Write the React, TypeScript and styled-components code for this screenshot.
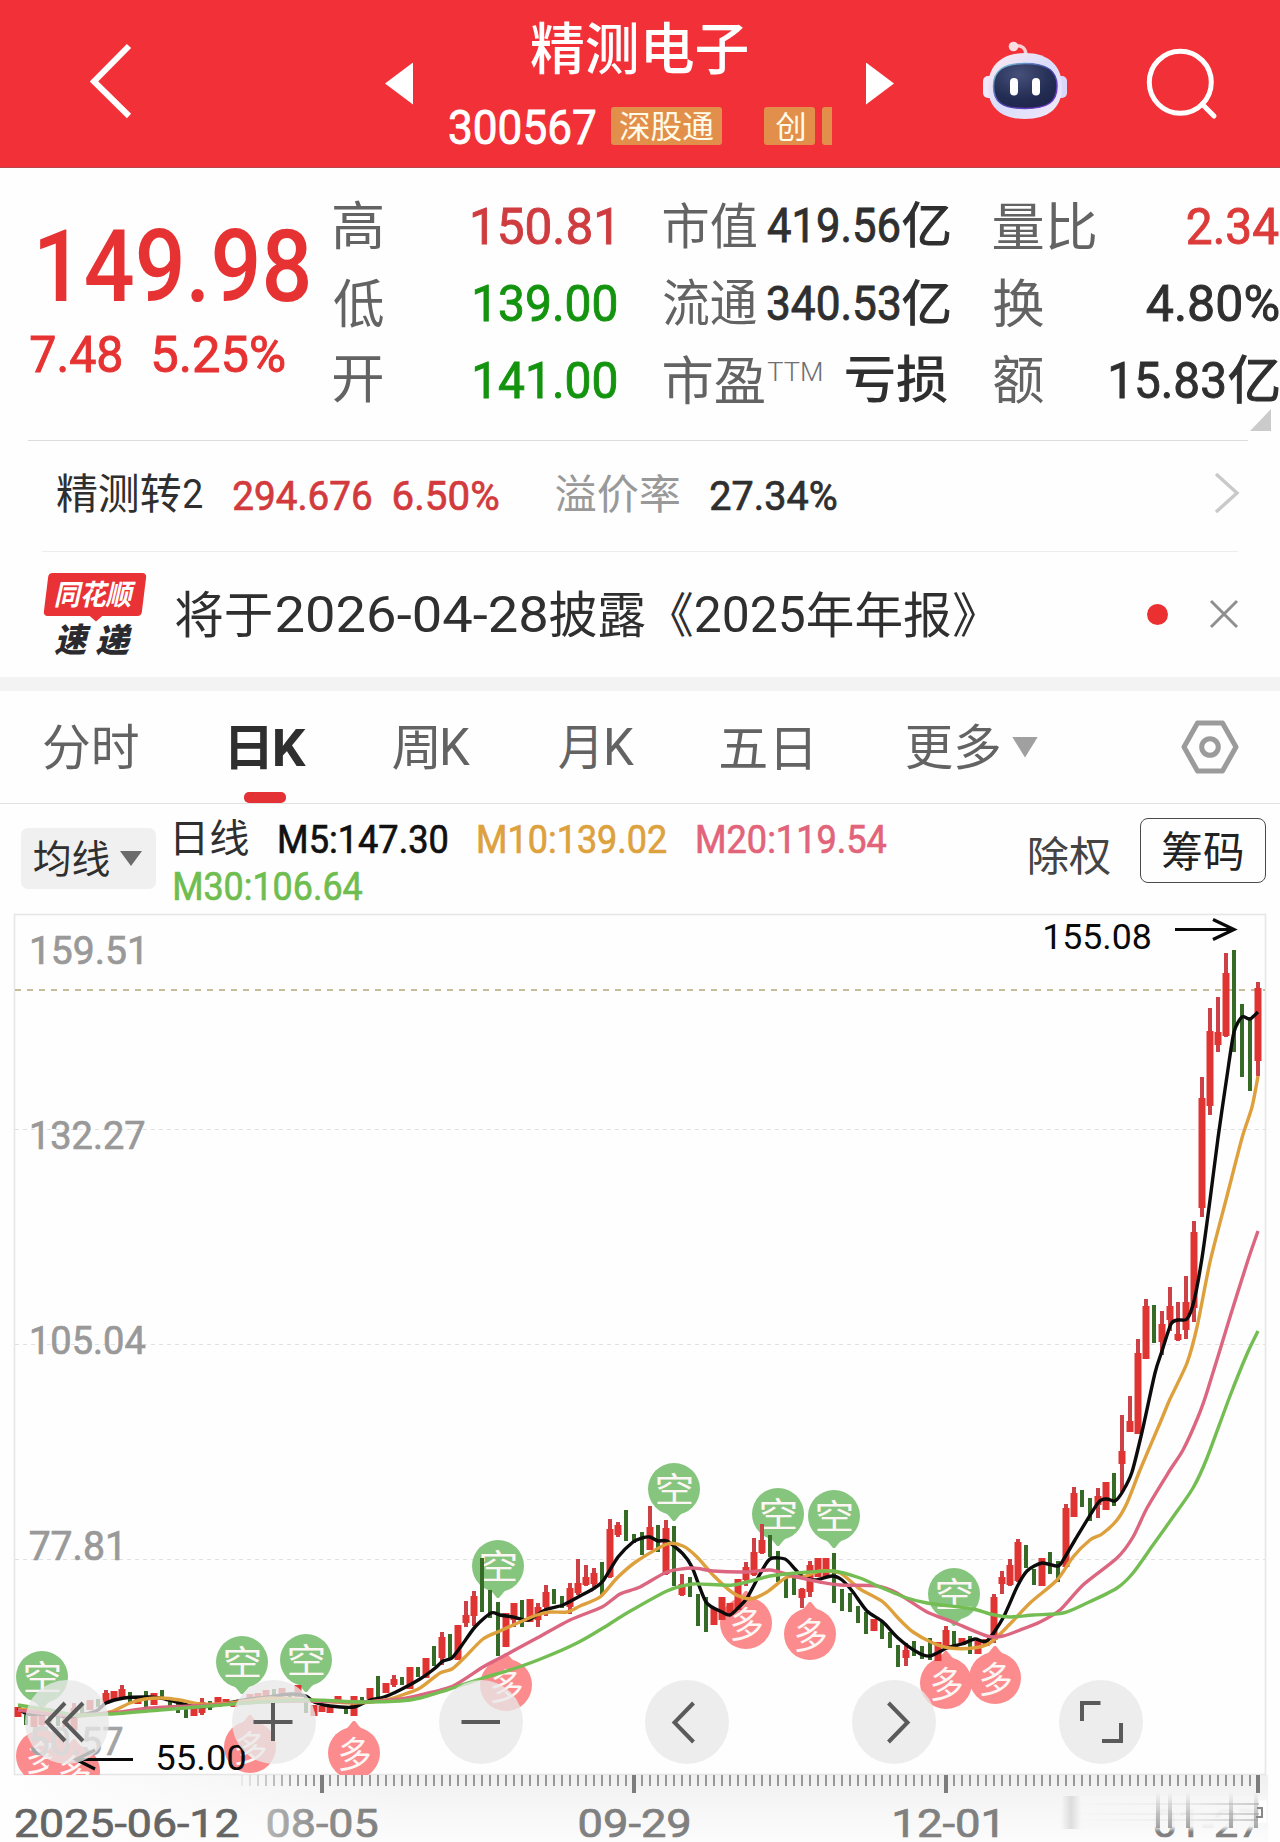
import React from "react";
import styled, { createGlobalStyle } from "styled-components";

const FONT = '"Roboto", "Noto Sans CJK SC", sans-serif';
const UP = "#e63232";
const DOWN = "#14930f";
const INK = "#2f2f2f";
const GREY = "#636363";

const GlobalStyle = createGlobalStyle`
  * { box-sizing: border-box; }
  html, body { margin: 0; padding: 0; background: #fefefe; }
  body { width: 1280px; overflow-x: hidden; font-family: ${FONT}; }
`;

/* ---------- type fitted to its ink box ---------- */

/* 450 is drawn as the regular face with a thin outline of its own colour */
const SEMI = 450;
const face = (weight: number) => (weight === SEMI ? 400 : weight);

let ctx: CanvasRenderingContext2D | null = null;
function measure(text: string, weight: number, italic: boolean, w: number, h: number) {
  if (!ctx) ctx = document.createElement("canvas").getContext("2d");
  ctx!.font = `${italic ? "italic " : ""}${face(weight)} 200px ${FONT}`;
  const m = ctx!.measureText(text);
  const a = m.actualBoundingBoxAscent / 200;
  const d = m.actualBoundingBoxDescent / 200;
  const l = m.actualBoundingBoxLeft / 200;
  const r = m.actualBoundingBoxRight / 200;
  const size = h / (a + d);
  const base = (1 + m.fontBoundingBoxAscent / 200 - m.fontBoundingBoxDescent / 200) / 2;
  return { size, sx: w / ((l + r) * size), left: l * size, asc: a * size, base: base * size };
}

const InkBox = styled.span<{ $ml?: number; $mt?: number; $mr?: number; $self?: string }>`
  display: block;
  flex: none;
  margin: ${(p) => p.$mt || 0}px ${(p) => p.$mr || 0}px 0 ${(p) => p.$ml || 0}px;
  align-self: ${(p) => p.$self || "auto"};
`;
const InkText = styled.span<{ $color: string; $weight: number; $italic?: boolean }>`
  display: block;
  width: max-content;
  white-space: nowrap;
  line-height: 1;
  text-spacing-trim: space-all;
  color: ${(p) => p.$color};
  font-weight: ${(p) => face(p.$weight)};
  -webkit-text-stroke: ${(p) => (p.$weight === SEMI ? "0.018em" : "0")} ${(p) => p.$color};
  font-style: ${(p) => (p.$italic ? "italic" : "normal")};
  transform-origin: 0 0;
`;

type InkProps = {
  children: string; w: number; h: number; color?: string; weight?: number; italic?: boolean;
  ml?: number; mt?: number; mr?: number; self?: string;
};
function Ink({ children, w, h, color = INK, weight = 400, italic = false, ml, mt, mr, self }: InkProps) {
  const m = measure(children, weight, italic, w, h);
  return (
    <InkBox $ml={ml} $mt={mt} $mr={mr} $self={self} style={{ width: w, height: h }}>
      <InkText
        $color={color} $weight={weight} $italic={italic}
        style={{
          fontSize: m.size,
          transform: `translate(${m.left * m.sx}px, ${m.asc - m.base}px) scaleX(${m.sx})`,
        }}
      >
        {children}
      </InkText>
    </InkBox>
  );
}

/* ---------- header ---------- */

const Header = styled.header`
  display: flex;
  align-items: center;
  height: 168px;
  padding-left: 90px;
  background: #f23037;
  border-bottom: 1px solid #b8474c;
`;
const BackIcon = styled.svg`
  width: 42px; height: 76px; margin: 0 253px 6px 0; flex: none;
`;
const Arrow = styled.span<{ $dir: "left" | "right" }>`
  flex: none;
  width: 28px; height: 42px;
  background: #fff;
  clip-path: ${(p) => (p.$dir === "left" ? "polygon(100% 0, 100% 100%, 0 50%)" : "polygon(0 0, 100% 50%, 0 100%)")};
`;
const TitleBlock = styled.div`
  display: flex;
  flex-direction: column;
  align-self: flex-start;
  width: 383px;
  margin: 23px 34px 0 36px;
`;
const CodeRow = styled.div`
  display: flex;
  align-items: center;
  width: 383px;
  height: 38px;
  margin-top: 32px;
`;
const Badge = styled.span<{ $w: number; $ml: number; $cut?: boolean }>`
  display: flex;
  align-items: center;
  justify-content: center;
  flex: none;
  width: ${(p) => p.$w}px;
  height: 38px;
  margin-left: ${(p) => p.$ml}px;
  border-radius: ${(p) => (p.$cut ? "3px 0 0 3px" : "3px")};
  background: #e28f4b;
`;
const RobotIcon = styled.svg`
  width: 90px; height: 82px; flex: none; margin: 0 0 6px 86px;
`;
const SearchIcon = styled.svg`
  width: 76px; height: 76px; flex: none; margin-left: 74px;
`;

/* ---------- quote ---------- */

const Quote = styled.section`
  position: relative;
  display: flex;
  height: 272px;
  padding: 18px 2px 0 29px;
`;
const PriceBlock = styled.div`
  width: 305px;
  padding: 43px 0 0 11px;
`;
const ChangeRow = styled.div`
  display: flex;
  margin: 33px 0 0 -10px;
`;
const Stats = styled.div<{ $ml: number; $w: number }>`
  display: grid;
  grid-template-rows: repeat(3, 77.5px);
  width: ${(p) => p.$w}px;
  margin-left: ${(p) => p.$ml}px;
  height: 233px;
`;
const Stat = styled.div`
  display: flex;
  align-items: center;
  justify-content: space-between;
`;
const Group = styled.div`
  display: flex;
  align-items: center;
`;
const Corner = styled.span`
  position: absolute;
  right: 9px;
  bottom: 9px;
  width: 21px;
  height: 22px;
  background: #cbcbcb;
  clip-path: polygon(100% 0, 100% 100%, 0 100%);
`;
const Rule = styled.hr<{ $l: number; $r: number; $c: string }>`
  height: 1px;
  margin: 0 ${(p) => p.$r}px 0 ${(p) => p.$l}px;
  border: 0;
  background: ${(p) => p.$c};
`;

/* ---------- bond and news rows ---------- */

const BondRow = styled.section`
  display: flex;
  align-items: center;
  height: 110px;
  padding: 0 40px 5px 57px;
`;
const Spacer = styled.span`
  flex: 1;
`;
const ChevronIcon = styled.svg`
  width: 26px; height: 44px; flex: none;
`;
const NewsRow = styled.section`
  display: flex;
  align-items: center;
  height: 125px;
  padding: 0 42px 0 43px;
`;
const Logo = styled.div`
  display: flex;
  flex-direction: column;
  align-items: center;
  width: 104px;
  height: 84px;
  margin-right: 29px;
`;
const LogoTag = styled.div`
  position: relative;
  display: flex;
  align-items: center;
  justify-content: center;
  width: 98px;
  height: 43px;
  &::before {
    content: "";
    position: absolute;
    inset: 0;
    border-radius: 4px;
    background: #e93236;
    transform: skewX(-7deg);
  }
  &::after {
    content: "";
    position: absolute;
    left: 42px;
    bottom: -6px;
    width: 16px;
    height: 7px;
    background: #e93236;
    clip-path: polygon(0 0, 100% 0, 50% 100%);
  }
  > span { position: relative; }
`;
const LogoWord = styled.div`
  display: flex;
  gap: 5px;
  margin: 8px 3px 0 0;
`;
const Dot = styled.span`
  width: 21px; height: 21px; border-radius: 50%; background: #ea3030; flex: none;
`;
const CloseIcon = styled.svg`
  width: 32px; height: 32px; flex: none; margin: 0 -2px 2px 40px;
`;
const Band = styled.div`
  height: 14px;
  background: #f3f3f3;
`;

/* ---------- tabs ---------- */

const Tabs = styled.nav`
  display: flex;
  align-items: center;
  height: 112px;
  padding-left: 44px;
`;
const Tab = styled.div<{ $ml: number; $active?: boolean }>`
  position: relative;
  display: flex;
  align-items: center;
  height: 112px;
  margin-left: ${(p) => p.$ml}px;
  &::after {
    content: "";
    display: ${(p) => (p.$active ? "block" : "none")};
    position: absolute;
    left: 13px;
    bottom: 0;
    width: 42px;
    height: 11px;
    border-radius: 5px;
    background: #e43135;
  }
`;
const Caret = styled.span<{ $w: number; $h: number; $ml: number; $c: string }>`
  flex: none;
  width: ${(p) => p.$w}px;
  height: ${(p) => p.$h}px;
  margin-left: ${(p) => p.$ml}px;
  background: ${(p) => p.$c};
  clip-path: polygon(0 0, 100% 0, 50% 100%);
`;
const HexIcon = styled.svg`
  width: 60px; height: 56px; flex: none; margin-left: 142px;
`;

/* ---------- indicator bar ---------- */

const Indicators = styled.section`
  display: flex;
  height: 102px;
  padding: 14px 14px 0 21px;
`;
const Chip = styled.div`
  display: flex;
  align-items: center;
  width: 135px;
  height: 61px;
  margin-top: 10px;
  padding-left: 12px;
  border-radius: 7px;
  background: #f0f0f0;
`;
const Legend = styled.div`
  flex: 1;
  padding-top: 1px;
`;
const LegendRow = styled.div`
  display: flex;
  align-items: center;
`;
const ChipsButton = styled.div`
  display: flex;
  align-items: center;
  justify-content: center;
  width: 126px;
  height: 65px;
  margin-left: 30px;
  border: 1.5px solid #4a4a4a;
  border-radius: 8px;
`;

/* ---------- chart ---------- */

const ChartPanel = styled.section`
  position: relative;
  height: 936px;
  overflow: hidden;
`;
const ChartSvg = styled.svg`
  display: block;
  width: 1280px;
  height: 936px;
`;
const Controls = styled.div`
  position: absolute;
  left: 25px;
  top: 774px;
  width: 1118px;
  display: flex;
  justify-content: space-between;
`;
const RoundButton = styled.div`
  width: 84px;
  height: 84px;
  border-radius: 50%;
  background: rgba(232, 232, 232, 0.78);
  svg { display: block; width: 84px; height: 84px; }
`;

type Candle = [0 | 1, number, number, number?, number?];
/* 1 = up; then high, low and, where they differ, body top and body bottom */
const CANDLES: Candle[] = [
  [1,1707,1717],[0,1715,1725],[1,1713,1727],[1,1713,1725],[0,1712,1722],[0,1714,1726],[1,1715,1727],[1,1703,1733,1708,1730],[0,1704,1716],[1,1700,1710],
  [0,1699,1707],[1,1690,1704,1693,1704],[1,1691,1700],[1,1685,1698,1689,1698],[0,1692,1703],[1,1697,1704],[0,1691,1708],[1,1693,1705],[0,1690,1700],[0,1697,1707],
  [0,1702,1713],[0,1705,1718],[1,1706,1716],[1,1698,1715,1702,1713],[0,1701,1710],[1,1697,1707],[1,1699,1706],[1,1701,1707],[0,1701,1704],[1,1694,1701],
  [1,1693,1699],[1,1690,1698],[0,1689,1697],[1,1688,1695],[0,1693,1698],[1,1685,1697],[0,1697,1713],[1,1705,1716],[1,1706,1712],[1,1707,1713],
  [1,1696,1703],[0,1707,1714],[1,1696,1716],[0,1697,1702],[1,1688,1699],[0,1676,1698],[1,1683,1693],[1,1675,1687,1679,1685],[0,1677,1685],[1,1667,1689],
  [0,1667,1677],[1,1658,1678],[0,1646,1666],[1,1632,1665,1637,1658],[0,1634,1658],[1,1625,1660],[1,1601,1627,1615,1623],[1,1591,1626,1596,1616],[0,1558,1612],[0,1590,1618],
  [0,1602,1656],[1,1613,1647],[1,1603,1627,1603,1620],[0,1600,1627],[1,1599,1622],[1,1603,1627,1607,1620],[1,1585,1616,1592,1607],[0,1589,1604],[0,1596,1608],[1,1583,1614,1588,1607],
  [1,1559,1595,1583,1593],[1,1565,1586,1577,1585],[1,1568,1587,1573,1584],[0,1562,1596],[1,1519,1578,1529,1577],[1,1522,1537,1525,1535],[0,1510,1541],[0,1534,1543],[0,1532,1555],[1,1506,1550,1527,1550],
  [0,1525,1552],[1,1520,1575,1528,1574],[0,1526,1586],[1,1574,1596,1584,1595],[0,1577,1597],[0,1594,1626],[0,1597,1632],[1,1608,1625],[1,1597,1620],[1,1603,1615],
  [1,1579,1610],[1,1562,1586,1567,1580],[1,1538,1576,1552,1575],[1,1524,1554,1540,1553],[0,1535,1557],[0,1551,1582],[0,1577,1598],[0,1577,1595],[1,1588,1608,1589,1598],[1,1561,1597,1565,1592],
  [1,1558,1577],[1,1558,1577],[0,1553,1603],[0,1589,1611],[0,1593,1612],[0,1606,1623],[0,1612,1634],[1,1619,1631],[0,1622,1639],[0,1632,1648],
  [0,1645,1667],[1,1643,1666,1650,1658],[0,1641,1656],[0,1646,1659],[0,1638,1660],[1,1642,1661],[1,1626,1647,1630,1647],[0,1631,1645],[1,1638,1645],[0,1636,1654],
  [1,1641,1654],[1,1639,1646],[1,1594,1643,1597,1640],[1,1571,1594,1577,1584],[1,1559,1586,1565,1585],[1,1539,1582,1542,1581],[0,1545,1568],[0,1569,1585],[1,1558,1586],[0,1552,1574],
  [0,1561,1582],[1,1504,1568,1508,1567],[1,1487,1517,1493,1517],[0,1490,1507],[0,1498,1521],[1,1488,1518,1496,1505],[1,1482,1510],[0,1473,1506],[1,1415,1492,1451,1464],[1,1396,1432,1421,1432],
  [1,1339,1434,1353,1434],[1,1299,1359,1306,1359],[0,1305,1343],[1,1311,1355,1324,1342],[1,1287,1331,1306,1320],[1,1302,1341,1334,1340],[1,1276,1339,1302,1330],[1,1221,1322,1232,1308],[1,1077,1217,1098,1208],[1,1008,1115,1031,1106],
  [1,997,1052,1032,1045],[1,953,1037,973,1036],[0,950,1052],[0,1004,1077],[0,1017,1091],[1,982,1076,988,1061],
];

const MA5 = "18,1708 28,1714 50,1714 70,1717 96,1711 106,1703 124,1698 150,1697 165,1699 180,1703 192,1706 210,1706 250,1699 270,1697 290,1694 306,1696 314,1702 330,1706 354,1707 370,1700 384,1697 400,1690 420,1679 434,1669 443,1661 452,1658 462,1645 475,1627 491,1613 500,1615 513,1617 528,1620 545,1610 563,1605 580,1596 593,1589 603,1581 618,1557 633,1542 642,1538 650,1537 658,1541 667,1541 683,1554 692,1567 706,1602 722,1612 730,1615 738,1608 747,1598 760,1574 770,1559 785,1559 795,1569 802,1576 815,1580 832,1576 842,1580 853,1592 867,1611 883,1622 898,1638 917,1652 930,1656 947,1648 962,1644 975,1639 987,1641 1003,1618 1017,1587 1027,1571 1042,1563 1058,1566 1065,1557 1075,1540 1098,1503 1107,1499 1115,1501 1123,1491 1132,1472 1142,1432 1155,1373 1162,1351 1171,1324 1178,1320 1187,1319 1194,1301 1202,1258 1210,1200 1218,1138 1227,1076 1234,1032 1242,1017 1250,1019 1258,1012";
const MA10 = "18,1709 50,1712 80,1716 110,1712 130,1703 145,1699 162,1698 180,1700 200,1704 230,1703 270,1698 320,1701 354,1703 385,1700 405,1694 420,1688 440,1673 452,1669 465,1657 483,1639 500,1631 520,1622 537,1615 550,1612 567,1612 580,1606 600,1597 617,1578 637,1561 667,1544 683,1546 697,1557 713,1575 733,1593 750,1599 767,1592 787,1577 803,1577 820,1571 840,1573 860,1589 883,1602 900,1620 913,1632 933,1643 950,1648 973,1648 990,1643 1010,1624 1030,1603 1057,1580 1073,1557 1090,1540 1102,1534 1117,1520 1127,1503 1140,1470 1160,1423 1170,1399 1187,1363 1197,1327 1210,1262 1227,1196 1242,1138 1252,1107 1258,1076";
const MA20 = "18,1710 60,1715 110,1713 150,1708 210,1705 260,1702 310,1701 360,1702 400,1699 420,1695 453,1686 483,1667 500,1658 537,1638 570,1620 602,1607 620,1594 640,1587 667,1572 693,1568 713,1571 747,1572 770,1570 793,1576 820,1582 840,1585 877,1586 897,1593 927,1612 953,1622 987,1636 1003,1636 1020,1630 1040,1622 1060,1610 1083,1585 1117,1558 1133,1537 1147,1508 1170,1470 1183,1450 1198,1417 1207,1392 1230,1317 1248,1260 1258,1231";
const MA30 = "18,1705 50,1710 75,1715 110,1714 160,1710 210,1706 260,1702 310,1700 360,1702 400,1701 420,1698 453,1688 483,1678 513,1669 543,1658 577,1643 603,1628 627,1613 667,1591 693,1584 733,1585 770,1576 797,1573 833,1571 860,1578 880,1587 907,1598 927,1603 973,1609 990,1614 1010,1617 1033,1615 1063,1613 1087,1603 1117,1588 1133,1573 1153,1545 1173,1517 1193,1488 1207,1458 1230,1396 1247,1354 1258,1331";

/* Catmull-Rom smoothing through the sampled average values */
function smooth(points: string) {
  const p = points.split(" ").map((s) => s.split(",").map(Number));
  let d = `M${p[0][0]},${p[0][1]}`;
  for (let i = 0; i < p.length - 1; i++) {
    const a = p[i - 1] || p[i], b = p[i], c = p[i + 1], e = p[i + 2] || c;
    const k = 8;
    d += ` C${(b[0] + (c[0] - a[0]) / k).toFixed(1)},${(b[1] + (c[1] - a[1]) / k).toFixed(1)} ${(c[0] - (e[0] - b[0]) / k).toFixed(1)},${(c[1] - (e[1] - b[1]) / k).toFixed(1)} ${c[0]},${c[1]}`;
  }
  return d;
}

const SHORTS = [[42, 1677], [242, 1662], [306, 1660], [498, 1566], [674, 1489], [778, 1514], [834, 1516], [954, 1594]];
const LONGS = [[42, 1756], [74, 1771], [250, 1747], [354, 1753], [506, 1685], [746, 1623], [810, 1634], [946, 1683], [995, 1678]];

function SvgInk(p: { x: number; y: number; w: number; h: number; children: string; fill: string; weight?: number }) {
  const weight = p.weight || 400;
  const m = measure(p.children, weight, false, p.w, p.h);
  return (
    <text
      transform={`translate(${p.x + m.left * m.sx} ${p.y + m.asc}) scale(${m.sx} 1)`}
      fontFamily={FONT} fontSize={m.size} fontWeight={face(weight)} fill={p.fill}
      stroke={weight === SEMI ? p.fill : "none"} strokeWidth={m.size * 0.018}
    >
      {p.children}
    </text>
  );
}

function Marker({ x, y, long }: { x: number; y: number; long?: boolean }) {
  const tip = "M-22,13 Q-8,22 -1,32 L1,32 Q8,22 22,13 Z";
  return (
    <g transform={`translate(${x} ${y})`}>
      <g fill={long ? "#fb8b8c" : "#86c57e"} transform={long ? "scale(1 -1)" : undefined}>
        <circle r="26" />
        <path d={tip} />
      </g>
      <SvgInk x={long ? -14 : -16.5} y={long ? -16 : -16} w={long ? 30 : 34} h={long ? 34 : 31} fill="#fdf6f4">
        {long ? "多" : "空"}
      </SvgInk>
    </g>
  );
}

function Chart() {
  const ticks = [];
  for (let x = 242; x <= 1258; x += 8) {
    const major = x >= 322 && (x - 322) % 312 === 0;
    ticks.push(
      <rect
        key={x} x={major ? x - 2 : x - 1} y={1775} width={major ? 4 : 2} height={major ? 18 : 11}
        fill={major ? "#7d7d7d" : "#989898"} opacity={Math.min(1, (x - 232) / 70)}
      />
    );
  }
  return (
    <ChartSvg viewBox="0 906 1280 936">
      <defs>
        <linearGradient id="axis" x1="0" y1="0" x2="0" y2="1">
          <stop offset="0" stopColor="#f0f0f0" />
          <stop offset="0.6" stopColor="#f8f8f8" />
          <stop offset="1" stopColor="#fcfcfc" />
        </linearGradient>
        <linearGradient id="axisLeft" x1="0" y1="0" x2="1" y2="0">
          <stop offset="0" stopColor="#fefefe" />
          <stop offset="1" stopColor="#fefefe" stopOpacity="0" />
        </linearGradient>
        <linearGradient id="dateFade" x1="0" y1="0" x2="1" y2="0">
          <stop offset="0" stopColor="#b4b4b4" />
          <stop offset="0.5" stopColor="#8c8c8c" />
          <stop offset="1" stopColor="#808080" />
        </linearGradient>
        <linearGradient id="veil" x1="0" y1="0" x2="0" y2="1">
          <stop offset="0" stopColor="#f6f6f6" stopOpacity="0.95" />
          <stop offset="0.84" stopColor="#f8f8f8" stopOpacity="0.95" />
          <stop offset="1" stopColor="#f8f8f8" stopOpacity="0" />
        </linearGradient>
        <linearGradient id="streak" x1="0" y1="0" x2="0" y2="1">
          <stop offset="0" stopColor="#888" stopOpacity="0" />
          <stop offset="1" stopColor="#888" stopOpacity="0.75" />
        </linearGradient>
        <linearGradient id="smear" x1="0" y1="0" x2="1" y2="0">
          <stop offset="0" stopColor="#aaa" stopOpacity="0" />
          <stop offset="0.6" stopColor="#aaa" stopOpacity="0.14" />
          <stop offset="1" stopColor="#999" stopOpacity="0.5" />
        </linearGradient>
        <linearGradient id="smudge" x1="0" y1="0" x2="1" y2="0">
          <stop offset="0" stopColor="#aaa" stopOpacity="0" />
          <stop offset="0.5" stopColor="#aaa" stopOpacity="0.35" />
          <stop offset="1" stopColor="#aaa" stopOpacity="0" />
        </linearGradient>
        <clipPath id="frame"><rect x="14" y="914" width="1252" height="861" /></clipPath>
      </defs>

      <rect x="0" y="1775" width="1268" height="67" fill="url(#axis)" />
      <rect x="0" y="1775" width="420" height="67" fill="url(#axisLeft)" />

      <rect x="14.5" y="914.5" width="1251" height="860" fill="none" stroke="#e6e6e6" strokeWidth="1.6" />
      {[1129, 1344, 1559].map((y) => (
        <line key={y} x1="15" x2="1265" y1={y + 0.5} y2={y + 0.5} stroke="#e0e0e0" strokeDasharray="4 4" />
      ))}
      <line x1="15" x2="1265" y1="990" y2="990" stroke="#b5a878" strokeWidth="1.6" strokeDasharray="6 6" />

      <SvgInk x={32} y={935} w={109} h={29} fill="#999" weight={SEMI}>159.51</SvgInk>
      <SvgInk x={32} y={1120} w={112} h={29} fill="#999" weight={SEMI}>132.27</SvgInk>
      <SvgInk x={32} y={1325} w={113} h={29} fill="#999" weight={SEMI}>105.04</SvgInk>
      <SvgInk x={30} y={1530} w={89} h={30} fill="#999" weight={SEMI}>77.81</SvgInk>

      <g clipPath="url(#frame)">
        {SHORTS.map(([x, y]) => <Marker key={x} x={x} y={y} />)}
        {LONGS.map(([x, y]) => <Marker key={x} x={x} y={y} long />)}
        <SvgInk x={31} y={1726} w={91} h={29} fill="#a3a3a3" weight={SEMI}>50.57</SvgInk>
        {CANDLES.map(([up, hi, lo, top = hi, bottom = lo], i) => {
          const x = 18 + i * 8;
          return up ? (
            <g key={i}>
              <rect x={x - 2} y={hi} width="4" height={lo - hi} fill="#cb4145" />
              <rect x={x - 3.5} y={top} width="7" height={bottom - top} fill="#e03433" />
            </g>
          ) : (
            <rect key={i} x={x - 2} y={hi} width="4" height={lo - hi} fill="#356a27" />
          );
        })}
        <g fill="none" strokeWidth="3.4" strokeLinejoin="round">
          <path d={smooth(MA5)} stroke="#0c0c0c" />
          <path d={smooth(MA10)} stroke="#dea03c" />
          <path d={smooth(MA20)} stroke="#dc6680" />
          <path d={smooth(MA30)} stroke="#74bd53" />
        </g>
      </g>

      <g fill="none" stroke="#0a0a0a" strokeWidth="3.2">
        <path d="M1175,929.5 H1233" />
        <path d="M1213,919.500 L1234,929.5 L1213,939.5" />
        <path d="M133,1759.500 H78" />
        <path d="M95,1769 L76,1759.500 L95,1750" />
      </g>
      <SvgInk x={1045} y={923} w={105} h={26} fill="#0a0a0a">155.08</SvgInk>
      <SvgInk x={158} y={1744} w={87} h={26} fill="#0a0a0a">55.00</SvgInk>

      {ticks}
      <SvgInk x={16} y={1808} w={222} h={29} fill="#666" weight={SEMI}>2025-06-12</SvgInk>
      <SvgInk x={268} y={1808} w={109} h={29} fill="url(#dateFade)" weight={SEMI}>08-05</SvgInk>
      <SvgInk x={580} y={1808} w={109} h={29} fill="#808080" weight={SEMI}>09-29</SvgInk>
      <SvgInk x={895} y={1808} w={102} h={29} fill="#808080" weight={SEMI}>12-01</SvgInk>
      <SvgInk x={1155} y={1808} w={106} h={29} fill="#808080" weight={SEMI}>01-27</SvgInk>
      <rect x="1060" y="1796" width="208" height="36" fill="url(#veil)" />
      {[1156, 1168, 1186, 1229, 1254].map((x) => (
        <rect key={x} x={x} y="1792" width="4" height="36" fill="url(#streak)" />
      ))}
      <rect x="1061" y="1796" width="20" height="33" fill="url(#smudge)" />
      {[1803, 1813, 1819].map((y) => (
        <rect key={y} x="1070" y={y} width="192" height="2" fill="url(#smear)" />
      ))}
      <path d="M1259,1803 H1264 V1810 M1259,1813 H1264 V1820 H1258" fill="none" stroke="#fff" strokeWidth="5" />
      <path d="M1257,1808 H1262 V1817 H1256" fill="none" stroke="#888" strokeWidth="2" />
    </ChartSvg>
  );
}

const ICONS = [
  "M40,23 L22,42 L40,61 M58,23 L39.500,42 L58,61",
  "M21.500,42 H60.500 M41,23 V61",
  "M22.500,42 H61",
  "M48.500,23 L29.500,42.500 L48.500,62",
  "M36.500,23 L55.500,42.500 L36.500,62",
  "M23,41 V23 H41.500 M43,61 H62 V43",
];

export default function App() {
  return (
    <>
      <GlobalStyle />
      <Header>
        <BackIcon viewBox="0 0 42 76">
          <path d="M39,3 L4,38.500 L39,73" fill="none" stroke="#fff" strokeWidth="6" />
        </BackIcon>
        <Arrow $dir="left" />
        <TitleBlock>
          <Ink w={216} h={52} color="#fff" weight={500} ml={82}>精测电子</Ink>
          <CodeRow>
            <Ink w={145} h={36} color="#fff" weight={SEMI} mt={2} ml={1}>300567</Ink>
            <Badge $w={111} $ml={16}><Ink w={93} h={29} color="#fffbe9">深股通</Ink></Badge>
            <Badge $w={51} $ml={42}><Ink w={28} h={29} color="#fffbe9">创</Ink></Badge>
            <Badge $w={10} $ml={7} $cut />
          </CodeRow>
        </TitleBlock>
        <Arrow $dir="right" />
        <RobotIcon viewBox="980 40 90 82">
          <defs>
            <linearGradient id="shell" x1="0" y1="0" x2="1" y2="1">
              <stop offset="0" stopColor="#ffe9ee" />
              <stop offset="0.5" stopColor="#d9dcfb" />
              <stop offset="1" stopColor="#f3ecfa" />
            </linearGradient>
            <linearGradient id="rim" x1="0" y1="0" x2="1" y2="1">
              <stop offset="0" stopColor="#7fd4dd" />
              <stop offset="0.5" stopColor="#4a46b0" />
              <stop offset="1" stopColor="#7a35c8" />
            </linearGradient>
            <radialGradient id="visor" cx="0.4" cy="0.25" r="0.9">
              <stop offset="0" stopColor="#46507a" />
              <stop offset="0.6" stopColor="#232c52" />
              <stop offset="1" stopColor="#1d2348" />
            </radialGradient>
          </defs>
          <path d="M1014,46 Q1026,44 1026,56" fill="none" stroke="#fbcdd4" strokeWidth="3.500" />
          <circle cx="1013.500" cy="46.500" r="4.800" fill="#fcdde2" />
          <rect x="983" y="76" width="12" height="22" rx="5" fill="#efe9fc" />
          <rect x="1055" y="76" width="12" height="22" rx="5" fill="#dcd6fa" />
          <path d="M1025,53 C1049,53 1062,66 1062,87 C1062,108 1048,119 1025,119 C1002,119 988,108 988,87 C988,66 1001,53 1025,53 Z" fill="url(#shell)" />
          <path d="M1025,63.500 C1046,63.500 1057,70 1057,86 C1057,102 1048,108.500 1025,108.500 C1002,108.500 993.500,102 993.500,86 C993.500,70 1004,63.500 1025,63.500 Z" fill="url(#visor)" stroke="url(#rim)" strokeWidth="1.500" />
          <rect x="1010" y="78" width="8" height="17.500" rx="4" fill="#fff" />
          <rect x="1032" y="78" width="8" height="17.500" rx="4" fill="#fff" />
        </RobotIcon>
        <SearchIcon viewBox="1144 46 76 76">
          <circle cx="1180.300" cy="82.300" r="31" fill="none" stroke="#fff" strokeWidth="5" />
          <path d="M1202,104 L1214,116" stroke="#fff" strokeWidth="5" strokeLinecap="round" />
        </SearchIcon>
      </Header>

      <Quote>
        <PriceBlock>
          <Ink w={268} h={74} color={UP} weight={500}>149.98</Ink>
          <ChangeRow>
            <Ink w={90} h={37} color={UP} weight={SEMI} ml={1}>7.48</Ink>
            <Ink w={130} h={37} color={UP} weight={SEMI} ml={33}>5.25%</Ink>
          </ChangeRow>
        </PriceBlock>
        <Stats $ml={0} $w={282}>
          <Stat><Ink w={48} h={49} color={GREY} mt={2}>高</Ink><Ink w={138} h={37} color="#cf3c40" weight={SEMI} mr={5} mt={4}>150.81</Ink></Stat>
          <Stat><Ink w={49} h={49} color={GREY} mt={2}>低</Ink><Ink w={141} h={37} color={DOWN} weight={SEMI} mt={3}>139.00</Ink></Stat>
          <Stat><Ink w={48} h={46} color={GREY} mt={1}>开</Ink><Ink w={141} h={37} color={DOWN} weight={SEMI} mt={1}>141.00</Ink></Stat>
        </Stats>
        <Stats $ml={48} $w={285}>
          <Stat>
            <Ink w={92} h={46} color={GREY} mt={2}>市值</Ink>
            <Group><Ink w={131} h={35} weight={SEMI} mt={4}>419.56</Ink><Ink w={46} h={45} weight={SEMI} ml={4} mt={2}>亿</Ink></Group>
          </Stat>
          <Stat>
            <Ink w={92} h={46} color={GREY} mt={1}>流通</Ink>
            <Group><Ink w={131} h={35} weight={SEMI} mt={4}>340.53</Ink><Ink w={46} h={45} weight={SEMI} ml={4} mt={2}>亿</Ink></Group>
          </Stat>
          <Stat>
            <Group><Ink w={100} h={49} color={GREY}>市盈</Ink><Ink w={53} h={19} color="#6f6f6f" weight={300} ml={4} mt={7} self="flex-start">TTM</Ink></Group>
            <Ink w={101} h={48} weight={500} mr={2} mt={1}>亏损</Ink>
          </Stat>
        </Stats>
        <Stats $ml={45} $w={284}>
          <Stat><Ink w={101} h={48} color={GREY} mt={2}>量比</Ink><Ink w={90} h={37} color="#dd3a3a" weight={SEMI} mt={4}>2.34</Ink></Stat>
          <Stat><Ink w={49} h={49} color={GREY} mt={2}>换</Ink><Ink w={131} h={37} weight={SEMI} mt={3}>4.80%</Ink></Stat>
          <Stat>
            <Ink w={49} h={49} color={GREY}>额</Ink>
            <Group><Ink w={113} h={37} weight={SEMI} mt={2}>15.83</Ink><Ink w={49} h={48} weight={SEMI} ml={5}>亿</Ink></Group>
          </Stat>
        </Stats>
        <Corner />
      </Quote>

      <Rule $l={28} $r={32} $c="#dcdcdc" />
      <BondRow>
        <Ink w={123} h={39}>精测转</Ink>
        <Ink w={18} h={30} ml={4}>2</Ink>
        <Ink w={137} h={30} color="#d23a3d" weight={SEMI} ml={32} mt={4}>294.676</Ink>
        <Ink w={104} h={30} color="#d23a3d" weight={SEMI} ml={23} mt={4}>6.50%</Ink>
        <Ink w={123} h={39} color="#999" ml={58} mt={2}>溢价率</Ink>
        <Ink w={125} h={30} weight={SEMI} ml={32} mt={4}>27.34%</Ink>
        <Spacer />
        <ChevronIcon viewBox="0 0 26 44">
          <path d="M2,2 L23,21 L2,40" fill="none" stroke="#c9c9c9" strokeWidth="3.4" />
        </ChevronIcon>
      </BondRow>
      <Rule $l={42} $r={42} $c="#ececec" />

      <NewsRow>
        <Logo>
          <LogoTag><Ink w={81} h={27} color="#fff" weight={700} italic>同花顺</Ink></LogoTag>
          <LogoWord>
            <Ink w={36} h={32} color="#2b2b2f" weight={900} italic>速</Ink>
            <Ink w={36} h={32} color="#2b2b2f" weight={900} italic>递</Ink>
          </LogoWord>
        </Logo>
        <Ink w={95} h={46}>将于</Ink>
        <Ink w={269} h={37} ml={6}>2026-04-28</Ink>
        <Ink w={95} h={46} ml={4}>披露</Ink>
        <Ink w={21} h={45} ml={26}>《</Ink>
        <Ink w={108} h={37} ml={4}>2025</Ink>
        <Ink w={142} h={46} ml={4}>年年报</Ink>
        <Ink w={21} h={45} ml={4}>》</Ink>
        <Spacer />
        <Dot />
        <CloseIcon viewBox="0 0 32 32">
          <path d="M3,3 L29,29 M29,3 L3,29" stroke="#8f8f8f" strokeWidth="3" />
        </CloseIcon>
      </NewsRow>
      <Band />

      <Tabs>
        <Tab $ml={0}><Ink w={94} h={45} color={GREY} mt={1}>分时</Ink></Tab>
        <Tab $ml={93} $active>
          <Ink w={36} h={43} weight={700} mt={2}>日</Ink><Ink w={31} h={37} weight={700} ml={8} mt={2}>K</Ink>
        </Tab>
        <Tab $ml={87}><Ink w={43} h={43} color={GREY} mt={3}>周</Ink><Ink w={27} h={37} color={GREY} ml={7} mt={1}>K</Ink></Tab>
        <Tab $ml={89}><Ink w={37} h={43} color={GREY} mt={3}>月</Ink><Ink w={27} h={37} color={GREY} ml={11} mt={1}>K</Ink></Tab>
        <Tab $ml={87}><Ink w={89} h={42} color={GREY} mt={3}>五日</Ink></Tab>
        <Tab $ml={97}><Ink w={92} h={45} color={GREY} mt={1}>更多</Ink><Caret $w={26} $h={21} $ml={13} $c="#a0a0a0" /></Tab>
        <HexIcon viewBox="1180 719 60 56">
          <path d="M1197.500,723 H1222.500 L1236,747 L1222.500,771 H1197.500 L1184,747 Z" fill="none" stroke="#9b9b9b" strokeWidth="5" strokeLinejoin="round" />
          <circle cx="1210" cy="747" r="8.300" fill="none" stroke="#9b9b9b" strokeWidth="5" />
        </HexIcon>
      </Tabs>
      <Rule $l={0} $r={0} $c="#e2e2e2" />

      <Indicators>
        <Chip><Ink w={75} h={36} ml={1} mt={1}>均线</Ink><Caret $w={22} $h={15} $ml={11} $c="#6b6b6b" /></Chip>
        <Legend>
          <LegendRow>
            <Ink w={72} h={36} ml={20} mt={1}>日线</Ink>
            <Ink w={167} h={28} color="#111" weight={SEMI} ml={32} mt={2}>M5:147.30</Ink>
            <Ink w={187} h={28} color="#dda13e" weight={SEMI} ml={32} mt={2}>M10:139.02</Ink>
            <Ink w={188} h={28} color="#e2647a" weight={SEMI} ml={32} mt={2}>M20:119.54</Ink>
          </LegendRow>
          <Ink w={187} h={28} color="#6fbd50" weight={SEMI} ml={19} mt={16}>M30:106.64</Ink>
        </Legend>
        <Ink w={80} h={39} color="#444" mt={19}>除权</Ink>
        <ChipsButton><Ink w={79} h={39} color="#222" mt={1} mr={1}>筹码</Ink></ChipsButton>
      </Indicators>

      <ChartPanel>
        <Chart />
        <Controls>
          {ICONS.map((d) => (
            <RoundButton key={d}>
              <svg viewBox="0 0 84 84"><path d={d} fill="none" stroke="#5a5a5a" strokeWidth="4" /></svg>
            </RoundButton>
          ))}
        </Controls>
      </ChartPanel>
    </>
  );
}
